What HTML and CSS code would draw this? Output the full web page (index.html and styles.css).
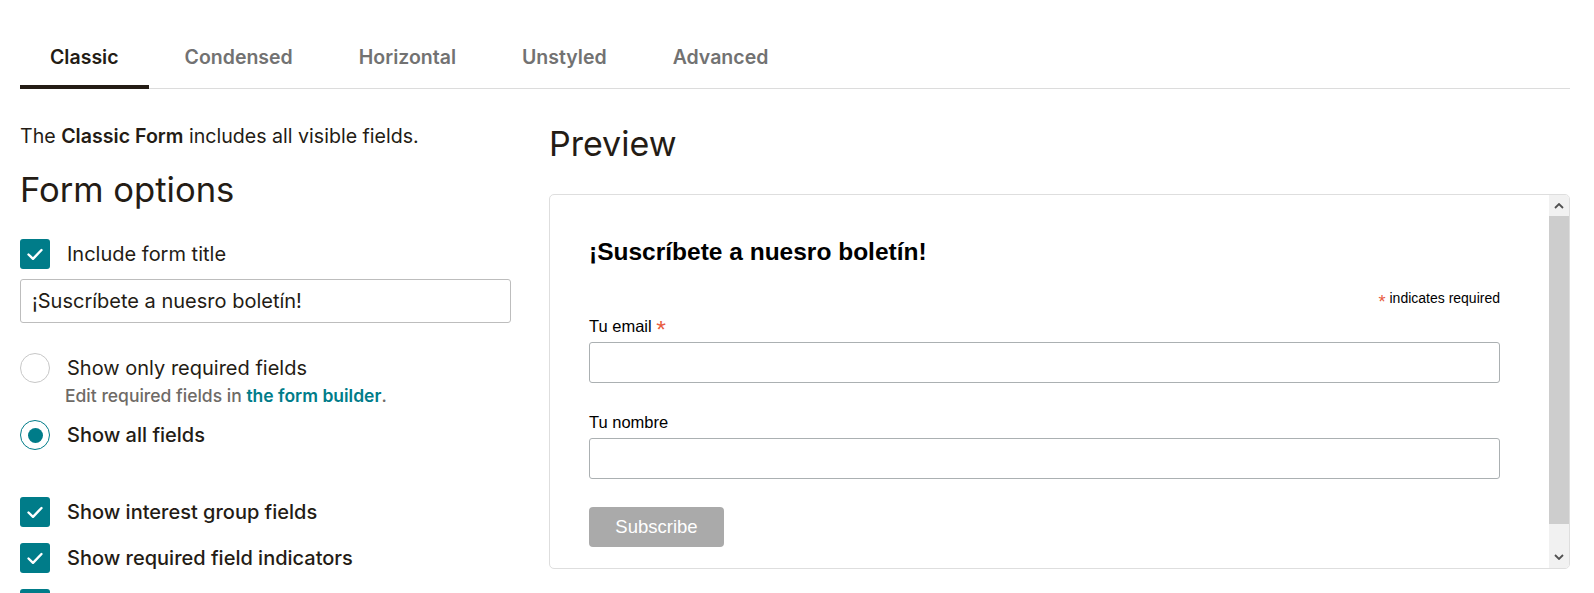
FILE: index.html
```html
<!DOCTYPE html>
<html lang="en">
<head>
<meta charset="utf-8">
<title>Signup form</title>
<link rel="stylesheet" href="styles.css">
</head>
<body>
<div class="page">
  <nav class="tabs">
    <a class="tab active">Classic</a>
    <a class="tab">Condensed</a>
    <a class="tab">Horizontal</a>
    <a class="tab">Unstyled</a>
    <a class="tab">Advanced</a>
  </nav>
  <div class="layout">
    <section class="options">
      <p class="intro">The <strong>Classic Form</strong> includes all visible fields.</p>
      <h2 class="heading">Form options</h2>
      <label class="row">
        <span class="checkbox"><svg viewBox="0 0 30 30" width="30" height="30"><polyline points="8.5,15.5 13,19.8 21.5,11" fill="none" stroke="#fff" stroke-width="2.4" stroke-linecap="round" stroke-linejoin="round"/></svg></span>
        <span class="label">Include form title</span>
      </label>
      <input class="title-input" type="text" value="¡Suscríbete a nuesro boletín!">
      <div class="radio-group">
        <label class="row">
          <span class="radio"></span>
          <span class="label">Show only required fields</span>
        </label>
        <p class="hint">Edit required fields in <a class="link">the form builder</a>.</p>
        <label class="row row-second">
          <span class="radio checked"><span class="dot"></span></span>
          <span class="label medium">Show all fields</span>
        </label>
      </div>
      <div class="checks">
        <label class="row">
          <span class="checkbox"><svg viewBox="0 0 30 30" width="30" height="30"><polyline points="8.5,15.5 13,19.8 21.5,11" fill="none" stroke="#fff" stroke-width="2.4" stroke-linecap="round" stroke-linejoin="round"/></svg></span>
          <span class="label medium">Show interest group fields</span>
        </label>
        <label class="row">
          <span class="checkbox"><svg viewBox="0 0 30 30" width="30" height="30"><polyline points="8.5,15.5 13,19.8 21.5,11" fill="none" stroke="#fff" stroke-width="2.4" stroke-linecap="round" stroke-linejoin="round"/></svg></span>
          <span class="label medium">Show required field indicators</span>
        </label>
        <div class="row">
          <span class="checkbox"><svg viewBox="0 0 30 30" width="30" height="30"><polyline points="8.5,15.5 13,19.8 21.5,11" fill="none" stroke="#fff" stroke-width="2.4" stroke-linecap="round" stroke-linejoin="round"/></svg></span>
        </div>
      </div>
    </section>
    <section class="preview">
      <h2 class="heading">Preview</h2>
      <div class="frame">
        <div class="frame-body">
          <h2 class="mc-title">¡Suscríbete a nuesro boletín!</h2>
          <div class="indicates"><span class="asterisk">*</span> indicates required</div>
          <div class="field first">
            <label class="mc-label">Tu email <span class="asterisk">*</span></label>
            <input class="mc-input" type="email">
          </div>
          <div class="field">
            <label class="mc-label">Tu nombre</label>
            <input class="mc-input" type="text">
          </div>
          <button class="mc-button" type="button">Subscribe</button>
        </div>
        <div class="scrollbar">
          <div class="sb-up"><svg viewBox="0 0 10 6" width="10" height="6"><polyline points="1,5 5,1 9,5" fill="none" stroke="#505050" stroke-width="1.8"/></svg></div>
          <div class="sb-thumb"></div>
          <div class="sb-down"><svg viewBox="0 0 10 6" width="10" height="6"><polyline points="1,1 5,5 9,1" fill="none" stroke="#505050" stroke-width="1.8"/></svg></div>
        </div>
      </div>
    </section>
  </div>
</div>
</body>
</html>
```
FILE: styles.css
```css
html { overflow: hidden; }
body {
  margin: 0;
  background: #fff;
  color: #241c15;
  font-family: Inter, "Liberation Sans", sans-serif;
}
.page {
  padding: 45px 24px 0 20px;
}
.tabs {
  display: flex;
  gap: 6px;
  border-bottom: 1px solid #dcdcdc;
}
.tab {
  display: block;
  padding: 0 30px 16px;
  font-size: 19.5px;
  line-height: 24px;
  font-weight: 600;
  color: #727272;
  border-bottom: 4px solid transparent;
  margin-bottom: -1px;
}
.tab.active {
  color: #241c15;
  border-bottom-color: #241c15;
}
.layout {
  display: grid;
  grid-template-columns: 491px 1fr;
  column-gap: 38px;
}
.options { padding-top: 33px; }
.preview { padding-top: 35px; }
.intro {
  margin: 0;
  font-size: 19.6px;
  line-height: 28px;
}
.intro strong { font-weight: 600; }
.heading {
  margin: 0;
  font-size: 34px;
  line-height: 40px;
  font-weight: 400;
}
.options .heading { margin-top: 19px; font-size: 34.6px; }
.row {
  display: flex;
  align-items: center;
  gap: 17px;
  height: 30px;
  font-size: 20px;
}
.options .heading + .row { margin-top: 30px; }
.label { line-height: 30px; }
.label.medium { font-weight: 500; }
.checkbox {
  width: 30px;
  height: 30px;
  flex: none;
  background: #007c89;
  border-radius: 3px;
  display: block;
}
.checkbox svg { display: block; }
.title-input {
  display: block;
  box-sizing: border-box;
  width: 100%;
  height: 44px;
  margin: 10px 0 0;
  padding: 0 11px;
  border: 1px solid #bdbdbd;
  border-radius: 3px;
  font-family: Inter, "Liberation Sans", sans-serif;
  font-size: 20px;
  color: #241c15;
  outline: none;
}
.radio-group { margin-top: 30px; }
.radio {
  width: 30px;
  height: 30px;
  flex: none;
  box-sizing: border-box;
  border: 1.5px solid #c7c7c7;
  border-radius: 50%;
  display: flex;
  align-items: center;
  justify-content: center;
}
.radio.checked { border-color: #007c89; }
.dot {
  width: 15px;
  height: 15px;
  border-radius: 50%;
  background: #007c89;
}
.hint {
  margin: 1px 0 0;
  padding-left: 45px;
  font-size: 17.5px;
  line-height: 24px;
  font-weight: 500;
  color: #6e6a66;
}
.link { color: #007c89; font-weight: 600; }
.row-second { margin-top: 12px; }
.checks {
  margin-top: 47px;
  display: flex;
  flex-direction: column;
  gap: 16px;
}
.frame {
  margin-top: 30px;
  height: 375px;
  box-sizing: border-box;
  border: 1px solid #dedede;
  border-radius: 5px;
  display: flex;
  overflow: hidden;
}
.frame-body {
  flex: 1;
  padding: 43px 49px 0 39px;
  font-family: "Liberation Sans", Arial, sans-serif;
  color: #000;
}
.mc-title {
  margin: 0;
  font-size: 24.5px;
  line-height: 28px;
  font-weight: 700;
}
.indicates {
  margin-top: 23px;
  text-align: right;
  font-size: 14px;
  line-height: 18px;
}
.asterisk {
  color: #e85c41;
  font-size: 150%;
  line-height: 0;
  position: relative;
  top: 6px;
}
.indicates .asterisk { top: 5px; font-size: 130%; }
.field { margin-top: 29px; }
.field.first { margin-top: 9px; }
.mc-label {
  display: block;
  font-size: 16.5px;
  line-height: 20px;
  margin-bottom: 6px;
}
.mc-input {
  display: block;
  box-sizing: border-box;
  width: 100%;
  height: 41px;
  margin: 0;
  border: 1px solid #abb0b2;
  border-radius: 3px;
  background: #fff;
  outline: none;
}
.mc-button {
  display: block;
  margin-top: 28px;
  width: 135px;
  height: 40px;
  border: 0;
  border-radius: 4px;
  background: #aaa;
  color: #fff;
  font-family: "Liberation Sans", Arial, sans-serif;
  font-size: 18.5px;
  padding: 0;
}
.scrollbar {
  width: 20px;
  flex: none;
  display: flex;
  flex-direction: column;
  background: #f1f1f1;
}
.sb-up {
  height: 21px;
  display: flex;
  align-items: center;
  justify-content: center;
}
.sb-thumb {
  height: 308px;
  background: #cdcdcd;
}
.sb-down {
  flex: 1;
  display: flex;
  align-items: flex-end;
  justify-content: center;
  padding-bottom: 8px;
}
.sb-up svg, .sb-down svg { display: block; }
```
